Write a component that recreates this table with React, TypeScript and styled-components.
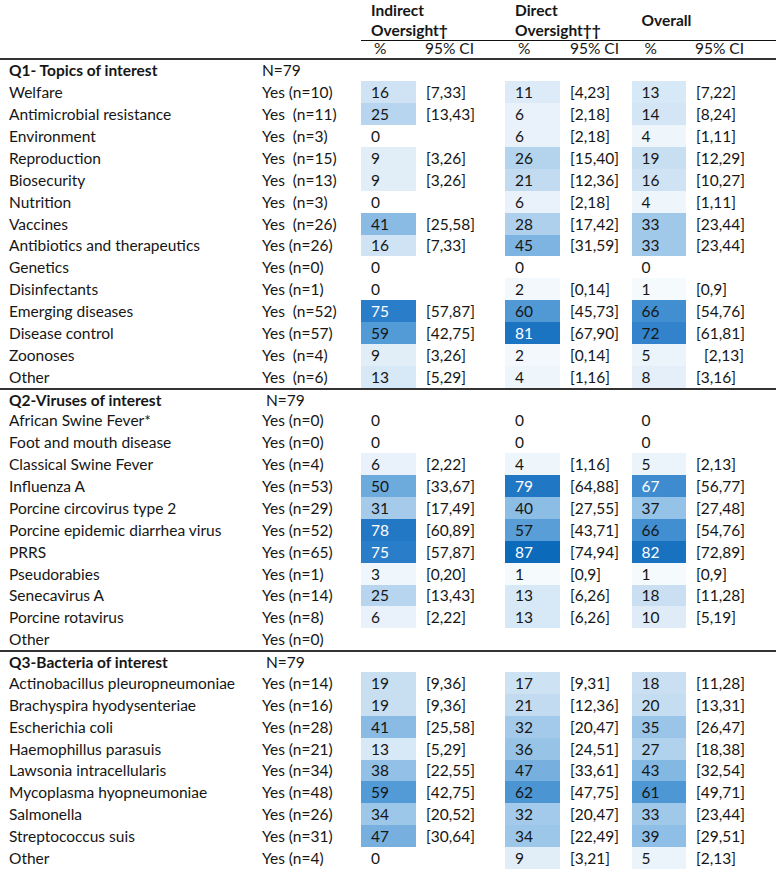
import React from "react";
import styled, { createGlobalStyle, css } from "styled-components";

const GlobalStyle = createGlobalStyle`
  html, body {
    margin: 0;
    padding: 0;
    background: #fff;
  }
  body {
    font-family: Lato, "Liberation Sans", sans-serif;
    color: #161616;
  }
`;

// shared column template: label | yes | % | CI | % | CI | % | CI
const columns = css`
  display: grid;
  grid-template-columns: 262px 99px 55px 89px 55px 71.5px 54.5px 90px;
`;

const Table = styled.div`
  width: 776px;
  font-size: 15.5px;
`;

const HeadTop = styled.div`
  ${columns}
  height: 36px;
`;

const Blank = styled.div`
  grid-column: span 2;
`;

const GroupTitle = styled.div<{ $center?: boolean }>`
  grid-column: span 2;
  box-sizing: border-box;
  padding-left: 10px;
  font-weight: 700;
  line-height: 20px;
  border-bottom: 1px solid #111;
  display: flex;
  flex-direction: column;
  justify-content: ${(p) => (p.$center ? "center" : "flex-start")};
  white-space: nowrap;
`;

const HeadSub = styled.div`
  ${columns}
  box-sizing: border-box;
  height: 23.5px;
  padding-top: 2px;
  border-bottom: 2px solid #333;
  align-items: center;
`;

const SubLabel = styled.div<{ $pad: number }>`
  padding-left: ${(p) => p.$pad}px;
`;

const Row = styled.div<{ $rule?: boolean }>`
  ${columns}
  box-sizing: border-box;
  height: 21.88px;
  align-items: stretch;
  border-top: ${(p) => (p.$rule ? "2px solid #333" : "none")};
`;

const Cell = styled.div<{ $pad?: number; $bold?: boolean }>`
  display: flex;
  align-items: center;
  padding-left: ${(p) => p.$pad ?? 0}px;
  font-weight: ${(p) => (p.$bold ? 700 : 400)};
  white-space: pre;
`;

const Pct = styled.div<{ $bg: string; $light: boolean }>`
  display: flex;
  align-items: center;
  padding-left: 10px;
  background: ${(p) => p.$bg};
  color: ${(p) => (p.$light ? "#fff" : "#161616")};
`;

const stops: [number, number[]][] = [
  [0, [248, 251, 254]],
  [20, [197, 221, 241]],
  [40, [140, 189, 229]],
  [60, [80, 153, 213]],
  [75, [42, 125, 200]],
  [87, [12, 106, 187]],
];

const shade = (v: number) => {
  if (!v) return "transparent";
  for (let i = 1; i < stops.length; i++) {
    const [b, cb] = stops[i];
    const [a, ca] = stops[i - 1];
    if (v <= b || i === stops.length - 1) {
      const t = Math.min(1, (v - a) / (b - a));
      const c = ca.map((x, k) => Math.round(x + (cb[k] - x) * t));
      return `rgb(${c.join(",")})`;
    }
  }
  return "transparent";
};

const lightText = (v: number) => v >= 75 || v === 67;

type Line = string[];

type Section = {
  title: string;
  n: string;
  rule: boolean;
  rows: Line[];
};

const sections: Section[] = [
  {
    title: "Q1- Topics of interest",
    n: "N=79",
    rule: false,
    rows: [
      ["Welfare", "Yes (n=10)", "16", "[7,33]", "11", "[4,23]", "13", "[7,22]"],
      ["Antimicrobial resistance", "Yes  (n=11)", "25", "[13,43]", "6", "[2,18]", "14", "[8,24]"],
      ["Environment", "Yes  (n=3)", "0", "", "6", "[2,18]", "4", "[1,11]"],
      ["Reproduction", "Yes  (n=15)", "9", "[3,26]", "26", "[15,40]", "19", "[12,29]"],
      ["Biosecurity", "Yes  (n=13)", "9", "[3,26]", "21", "[12,36]", "16", "[10,27]"],
      ["Nutrition", "Yes  (n=3)", "0", "", "6", "[2,18]", "4", "[1,11]"],
      ["Vaccines", "Yes  (n=26)", "41", "[25,58]", "28", "[17,42]", "33", "[23,44]"],
      ["Antibiotics and therapeutics", "Yes (n=26)", "16", "[7,33]", "45", "[31,59]", "33", "[23,44]"],
      ["Genetics", "Yes (n=0)", "0", "", "0", "", "0", ""],
      ["Disinfectants", "Yes (n=1)", "0", "", "2", "[0,14]", "1", "[0,9]"],
      ["Emerging diseases", "Yes  (n=52)", "75", "[57,87]", "60", "[45,73]", "66", "[54,76]"],
      ["Disease control", "Yes (n=57)", "59", "[42,75]", "81", "[67,90]", "72", "[61,81]"],
      ["Zoonoses", "Yes  (n=4)", "9", "[3,26]", "2", "[0,14]", "5", "  [2,13]"],
      ["Other", "Yes  (n=6)", "13", "[5,29]", "4", "[1,16]", "8", "[3,16]"],
    ],
  },
  {
    title: "Q2-Viruses of interest",
    n: " N=79",
    rule: true,
    rows: [
      ["African Swine Fever*", "Yes (n=0)", "0", "", "0", "", "0", ""],
      ["Foot and mouth disease", "Yes (n=0)", "0", "", "0", "", "0", ""],
      ["Classical Swine Fever", "Yes (n=4)", "6", "[2,22]", "4", "[1,16]", "5", "[2,13]"],
      ["Influenza A", "Yes (n=53)", "50", "[33,67]", "79", "[64,88]", "67", "[56,77]"],
      ["Porcine circovirus type 2", "Yes (n=29)", "31", "[17,49]", "40", "[27,55]", "37", "[27,48]"],
      ["Porcine epidemic diarrhea virus", "Yes (n=52)", "78", "[60,89]", "57", "[43,71]", "66", "[54,76]"],
      ["PRRS", "Yes (n=65)", "75", "[57,87]", "87", "[74,94]", "82", "[72,89]"],
      ["Pseudorabies", "Yes (n=1)", "3", "[0,20]", "1", "[0,9]", "1", "[0,9]"],
      ["Senecavirus A", "Yes (n=14)", "25", "[13,43]", "13", "[6,26]", "18", "[11,28]"],
      ["Porcine rotavirus", "Yes (n=8)", "6", "[2,22]", "13", "[6,26]", "10", "[5,19]"],
      ["Other", "Yes (n=0)", "", "", "", "", "", ""],
    ],
  },
  {
    title: "Q3-Bacteria of interest",
    n: " N=79",
    rule: true,
    rows: [
      ["Actinobacillus pleuropneumoniae", "Yes (n=14)", "19", "[9,36]", "17", "[9,31]", "18", "[11,28]"],
      ["Brachyspira hyodysenteriae", "Yes (n=16)", "19", "[9,36]", "21", "[12,36]", "20", "[13,31]"],
      ["Escherichia coli", "Yes (n=28)", "41", "[25,58]", "32", "[20,47]", "35", "[26,47]"],
      ["Haemophillus parasuis", "Yes (n=21)", "13", "[5,29]", "36", "[24,51]", "27", "[18,38]"],
      ["Lawsonia intracellularis", "Yes (n=34)", "38", "[22,55]", "47", "[33,61]", "43", "[32,54]"],
      ["Mycoplasma hyopneumoniae", "Yes (n=48)", "59", "[42,75]", "62", "[47,75]", "61", "[49,71]"],
      ["Salmonella", "Yes (n=26)", "34", "[20,52]", "32", "[20,47]", "33", "[23,44]"],
      ["Streptococcus suis", "Yes (n=31)", "47", "[30,64]", "34", "[22,49]", "39", "[29,51]"],
      ["Other", "Yes (n=4)", "0", "", "9", "[3,21]", "5", "[2,13]"],
    ],
  },
];

const DataRow = ({ line }: { line: Line }) => {
  const [label, yes, ...vals] = line;
  return (
    <Row>
      <Cell $pad={9}>{label}</Cell>
      <Cell>{yes}</Cell>
      {[0, 1, 2].map((g) => {
        const pct = vals[g * 2];
        const ci = vals[g * 2 + 1];
        const v = Number(pct) || 0;
        return (
          <React.Fragment key={g}>
            <Pct $bg={shade(v)} $light={lightText(v)}>
              {pct}
            </Pct>
            <Cell $pad={10}>{ci}</Cell>
          </React.Fragment>
        );
      })}
    </Row>
  );
};

export default function App() {
  return (
    <>
      <GlobalStyle />
      <Table>
        <HeadTop>
          <Blank />
          <GroupTitle>
            <span>Indirect</span>
            <span>Oversight†</span>
          </GroupTitle>
          <GroupTitle>
            <span>Direct</span>
            <span>Oversight††</span>
          </GroupTitle>
          <GroupTitle $center>
            <span>Overall</span>
          </GroupTitle>
        </HeadTop>
        <HeadSub>
          <div />
          <div />
          <SubLabel $pad={13}>%</SubLabel>
          <SubLabel $pad={9}>95% CI</SubLabel>
          <SubLabel $pad={13}>%</SubLabel>
          <SubLabel $pad={10}>95% CI</SubLabel>
          <SubLabel $pad={13}>%</SubLabel>
          <SubLabel $pad={9}>95% CI</SubLabel>
        </HeadSub>
        {sections.map((s) => (
          <React.Fragment key={s.title}>
            <Row $rule={s.rule}>
              <Cell $pad={9} $bold>
                {s.title}
              </Cell>
              <Cell>{s.n}</Cell>
            </Row>
            {s.rows.map((line, i) => (
              <DataRow key={s.title + i} line={line} />
            ))}
          </React.Fragment>
        ))}
      </Table>
    </>
  );
}
